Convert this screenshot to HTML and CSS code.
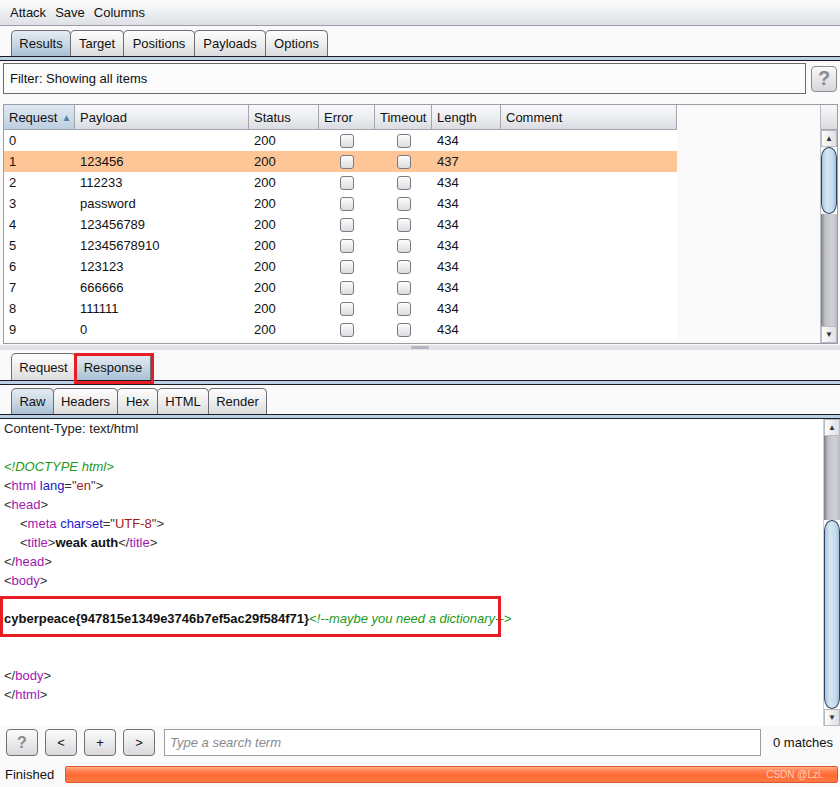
FILE: index.html
```html
<!DOCTYPE html>
<html lang="en">
<head>
<meta charset="UTF-8">
<title>Intruder attack</title>
<link rel="stylesheet" href="styles.css">
</head>
<body>
<div class="win">
  <div class="menubar">
    <span class="mi">Attack</span><span class="mi">Save</span><span class="mi">Columns</span>
  </div>

  <div class="tabs top-tabs">
    <div class="tab active w60">Results</div>
    <div class="tab w54">Target</div>
    <div class="tab w72">Positions</div>
    <div class="tab w72">Payloads</div>
    <div class="tab w63">Options</div>
  </div>
  <div class="tabline"></div>

  <div class="filterrow">
    <div class="filter">Filter: Showing all items</div>
    <div class="helpbtn">?</div>
  </div>

  <div class="tblwrap">
    <div class="tblmain">
      <div class="thead">
        <div class="grid">
          <div class="th sorted">Request <span class="sortarr">▲</span></div>
          <div class="th">Payload</div>
          <div class="th">Status</div>
          <div class="th">Error</div>
          <div class="th">Timeout</div>
          <div class="th">Length</div>
          <div class="th">Comment</div>
        </div>
      </div>
      <div class="tbody">
        <div class="grid row"><div class="td">0</div><div class="td"></div><div class="td">200</div><div class="td c"><span class="cb"></span></div><div class="td c"><span class="cb"></span></div><div class="td">434</div><div class="td"></div></div>
        <div class="grid row sel"><div class="td">1</div><div class="td">123456</div><div class="td">200</div><div class="td c"><span class="cb"></span></div><div class="td c"><span class="cb"></span></div><div class="td">437</div><div class="td"></div></div>
        <div class="grid row"><div class="td">2</div><div class="td">112233</div><div class="td">200</div><div class="td c"><span class="cb"></span></div><div class="td c"><span class="cb"></span></div><div class="td">434</div><div class="td"></div></div>
        <div class="grid row"><div class="td">3</div><div class="td">password</div><div class="td">200</div><div class="td c"><span class="cb"></span></div><div class="td c"><span class="cb"></span></div><div class="td">434</div><div class="td"></div></div>
        <div class="grid row"><div class="td">4</div><div class="td">123456789</div><div class="td">200</div><div class="td c"><span class="cb"></span></div><div class="td c"><span class="cb"></span></div><div class="td">434</div><div class="td"></div></div>
        <div class="grid row"><div class="td">5</div><div class="td">12345678910</div><div class="td">200</div><div class="td c"><span class="cb"></span></div><div class="td c"><span class="cb"></span></div><div class="td">434</div><div class="td"></div></div>
        <div class="grid row"><div class="td">6</div><div class="td">123123</div><div class="td">200</div><div class="td c"><span class="cb"></span></div><div class="td c"><span class="cb"></span></div><div class="td">434</div><div class="td"></div></div>
        <div class="grid row"><div class="td">7</div><div class="td">666666</div><div class="td">200</div><div class="td c"><span class="cb"></span></div><div class="td c"><span class="cb"></span></div><div class="td">434</div><div class="td"></div></div>
        <div class="grid row"><div class="td">8</div><div class="td">111111</div><div class="td">200</div><div class="td c"><span class="cb"></span></div><div class="td c"><span class="cb"></span></div><div class="td">434</div><div class="td"></div></div>
        <div class="grid row"><div class="td">9</div><div class="td">0</div><div class="td">200</div><div class="td c"><span class="cb"></span></div><div class="td c"><span class="cb"></span></div><div class="td">434</div><div class="td"></div></div>
      </div>
    </div>
    <div class="vscroll tblscroll">
      <div class="corner"></div>
      <div class="arrow">▲</div>
      <div class="thumb t1"></div>
      <div class="track"></div>
      <div class="arrow">▼</div>
    </div>
  </div>

  <div class="splitter"><span class="grip"></span></div>

  <div class="tabs rr-tabs">
    <div class="tab w65">Request</div>
    <div class="tab active w76">Response<span class="redbox rb-tab"></span></div>
  </div>
  <div class="tabline"></div>

  <div class="tabs raw-tabs">
    <div class="tab active w43">Raw</div>
    <div class="tab w65">Headers</div>
    <div class="tab w41">Hex</div>
    <div class="tab w52">HTML</div>
    <div class="tab w59">Render</div>
  </div>
  <div class="tabline"></div>

  <div class="content">
    <div class="code">
      <div class="ln">Content-Type: text/html</div>
      <div class="ln"></div>
      <div class="ln cm">&lt;!DOCTYPE html&gt;</div>
      <div class="ln"><span class="p">&lt;</span><span class="tg">html</span> <span class="at">lang</span><span class="p">=</span><span class="p">"</span><span class="av">en</span><span class="p">"&gt;</span></div>
      <div class="ln"><span class="p">&lt;</span><span class="tg">head</span><span class="p">&gt;</span></div>
      <div class="ln ind"><span class="p">&lt;</span><span class="tg">meta</span> <span class="at">charset</span><span class="p">=</span><span class="p">"</span><span class="av">UTF-8</span><span class="p">"&gt;</span></div>
      <div class="ln ind"><span class="p">&lt;</span><span class="tg">title</span><span class="p">&gt;</span><b>weak auth</b><span class="p">&lt;/</span><span class="tg">title</span><span class="p">&gt;</span></div>
      <div class="ln"><span class="p">&lt;/</span><span class="tg">head</span><span class="p">&gt;</span></div>
      <div class="ln"><span class="p">&lt;</span><span class="tg">body</span><span class="p">&gt;</span></div>
      <div class="ln"></div>
      <div class="ln flag"><b>cyberpeace{947815e1349e3746b7ef5ac29f584f71}</b><span class="cm">&lt;!--maybe you need a dictionary--&gt;</span><span class="redbox rb-flag"></span></div>
      <div class="ln"></div>
      <div class="ln"></div>
      <div class="ln"><span class="p">&lt;/</span><span class="tg">body</span><span class="p">&gt;</span></div>
      <div class="ln"><span class="p">&lt;/</span><span class="tg">html</span><span class="p">&gt;</span></div>
    </div>
    <div class="vscroll codescroll">
      <div class="arrow">▲</div>
      <div class="track t2a"></div>
      <div class="thumb t2"></div>
      <div class="arrow">▼</div>
    </div>
  </div>

  <div class="searchrow">
    <div class="btn q">?</div>
    <div class="btn">&lt;</div>
    <div class="btn">+</div>
    <div class="btn">&gt;</div>
    <div class="search">Type a search term</div>
    <div class="matches">0 matches</div>
  </div>

  <div class="statusrow">
    <div class="status">Finished</div>
    <div class="progress"><span class="wm">CSDN @Lzi.</span></div>
  </div>
</div>
</body>
</html>
```

FILE: styles.css
```css
* { box-sizing: border-box; }
html, body { margin: 0; padding: 0; }
body {
  width: 840px;
  height: 787px;
  overflow: hidden;
  background: #fafafa;
  font-family: "Liberation Sans", Arial, sans-serif;
  font-size: 13px;
  color: #111;
}
.win {
  width: 840px;
  height: 787px;
  display: flex;
  flex-direction: column;
  background: #fafafa;
}

/* menu */
.menubar {
  height: 26px;
  flex: 0 0 26px;
  display: flex;
  align-items: center;
  padding-left: 10px;
  padding-bottom: 1px;
  background: linear-gradient(#fbfbfc 0%, #f2f3f5 35%, #dfe0e6 100%);
  border-bottom: 1px solid #9a9ca6;
}
.mi { margin-right: 9px; color: #111; }

/* tabs */
.tabs {
  display: flex;
  padding-left: 11px;
  align-items: flex-end;
}
.top-tabs { margin-top: 4px; height: 26px; flex: 0 0 26px; }
.rr-tabs { margin-top: 0; height: 27px; flex: 0 0 27px; }
.raw-tabs { margin-top: 3px; height: 26px; flex: 0 0 26px; }
.tab {
  height: 100%;
  display: flex;
  align-items: center;
  justify-content: center;
  border: 1px solid #6e6e72;
  border-bottom: none;
  border-radius: 5px 5px 0 0;
  background: linear-gradient(#fdfdfd 0%, #eeeeef 50%, #dcdcde 100%);
  margin-right: -1px;
  position: relative;
  color: #111;
}
.tab.active {
  background: linear-gradient(#e6ecf2 0%, #c9d8e5 50%, #a9c0d4 100%);
}
.w41 { width: 41px; }
.w43 { width: 43px; }
.w52 { width: 52px; }
.w54 { width: 54px; }
.w59 { width: 59px; }
.w60 { width: 60px; }
.w63 { width: 63px; }
.w65 { width: 65px; }
.w72 { width: 72px; }
.w76 { width: 76px; }
.tabline {
  height: 5px;
  flex: 0 0 5px;
  background: #bcd0e4;
  border-top: 1px solid #1c1c28;
  border-bottom: 1px solid #1c1c28;
}

/* filter */
.filterrow {
  display: flex;
  align-items: center;
  padding: 2px 0 0 3px;
  height: 33px;
  flex: 0 0 33px;
}
.filter {
  width: 803px;
  height: 31px;
  border: 1px solid #6a6a6a;
  background: #fcfcfc;
  display: flex;
  align-items: center;
  padding-left: 6px;
}
.helpbtn {
  margin-left: 5px;
  width: 26px;
  height: 26px;
  border: 1px solid #8a8a8e;
  border-radius: 4px;
  background: linear-gradient(#fafafa, #d6d6da);
  color: #8a8a8e;
  font-weight: bold;
  font-size: 20px;
  display: flex;
  align-items: center;
  justify-content: center;
}

/* table */
.tblwrap {
  margin: 10px 2px 0 3px;
  height: 240px;
  flex: 0 0 240px;
  border: 1px solid #9b9da6;
  display: flex;
  background: #fafafa;
}
.tblmain { flex: 1; }
.grid {
  display: grid;
  grid-template-columns: 71px 174px 70px 56px 57px 69px 176px;
  width: 673px;
}
.thead .grid { height: 25px; }
.th {
  display: flex;
  align-items: center;
  padding-left: 5px;
  background: linear-gradient(#f8f8fa 0%, #eceef1 50%, #dadce1 100%);
  border-right: 1px solid #a3a6ad;
  border-bottom: 1px solid #a3a6ad;
  color: #111;
}
.th.sorted {
  background: linear-gradient(#dfe8f1 0%, #cfdcea 50%, #bccee0 100%);
}
.sortarr { font-size: 10px; color: #4f80ad; margin-left: 4px; }
.row { height: 21px; background: #fff; }
.row.sel { background: #fec697; }
.td {
  display: flex;
  align-items: center;
  padding-left: 5px;
  color: #111;
}
.td.c { justify-content: center; padding-left: 0; }
.cb {
  width: 14px;
  height: 14px;
  border: 1px solid #7a7a80;
  border-radius: 3px;
  background: linear-gradient(#fdfdfd, #dcdce0);
}

/* scrollbars */
.vscroll {
  width: 17px;
  display: flex;
  flex-direction: column;
  border-left: 1px solid #bdbfc6;
}
.corner {
  height: 25px;
  background: linear-gradient(#f8f8fa, #dadce1);
  border-bottom: 1px solid #a3a6ad;
}
.arrow {
  height: 17px;
  flex: 0 0 17px;
  font-size: 8px;
  color: #333;
  display: flex;
  align-items: center;
  justify-content: center;
  background: linear-gradient(to right, #fdfdfd, #dedfe3);
  border: 1px solid #b8bac0;
}
.track {
  flex: 1;
  background: linear-gradient(to right, #7d7f86 0%, #bfc1c7 25%, #cfd1d6 70%, #b9bbc1 100%);
}
.thumb {
  background: linear-gradient(to right, #a9c5de 0%, #d6e6f3 35%, #c6dbec 75%, #a3bfd8 100%);
  border: 1px solid #2b4460;
  border-radius: 9px / 12px;
}
.t1 { height: 67px; flex: 0 0 67px; }
.t2a { flex: 0 0 84px; }
.t2 { flex: 1; }

.splitter {
  height: 9px;
  flex: 0 0 9px;
  display: flex;
  justify-content: center;
  align-items: flex-start;
  background: linear-gradient(#fafafa 0, #fafafa 1px, #e2e3e9 1px, #e2e3e9 6px, #fafafa 6px);
}
.grip {
  width: 18px;
  height: 3px;
  margin-top: 2px;
  background: #b4b6be;
  border-radius: 1px;
}

/* red annotation boxes */
.redbox {
  position: absolute;
  border: 3px solid #e81c24;
  pointer-events: none;
}
.rb-tab { left: -2px; top: -1px; width: 80px; height: 31px; }

/* content */
.content {
  height: 307px;
  flex: 0 0 307px;
  display: flex;
  background: #fff;
}
.code {
  flex: 1;
  padding-left: 4px;
  background: #fff;
  color: #222;
}
.ln {
  height: 19px;
  line-height: 19px;
  white-space: pre;
  position: relative;
}
.ind { padding-left: 16px; }
.p { color: #333; }
.tg { color: #a117b0; }
.at { color: #1a1acc; }
.av { color: #a31818; }
.cm { color: #1d9a1d; font-style: italic; }
.code b { color: #111; }
.rb-flag { left: -4px; top: -13px; width: 501px; height: 41px; }
.codescroll { border-left: 1px solid #cfd1d6; }

/* search */
.searchrow {
  height: 27px;
  flex: 0 0 27px;
  margin-top: 3px;
  display: flex;
  align-items: center;
  padding-left: 6px;
}
.btn {
  width: 32px;
  height: 27px;
  margin-right: 7px;
  border: 1px solid #6f6f74;
  border-radius: 4px;
  background: linear-gradient(#fcfcfc, #d9d9dc);
  display: flex;
  align-items: center;
  justify-content: center;
  color: #111;
}
.btn.q { color: #8a8a8e; font-weight: bold; font-size: 16px; }
.search {
  margin-left: 2px;
  width: 597px;
  height: 27px;
  border: 1px solid #9d9da2;
  background: #fff;
  display: flex;
  align-items: center;
  padding-left: 5px;
  color: #8a8a8e;
  font-style: italic;
}
.matches { margin-left: 12px; color: #111; }

/* status */
.statusrow {
  height: 17px;
  flex: 0 0 17px;
  margin-top: 10px;
  display: flex;
  align-items: center;
  padding-left: 5px;
}
.status { width: 60px; color: #111; }
.progress {
  width: 773px;
  height: 17px;
  border: 1px solid #e2572a;
  border-radius: 2px;
  background: linear-gradient(#ffb08c 0%, #ff8250 25%, #ff6a34 55%, #ff7a44 100%);
  display: flex;
  align-items: center;
  justify-content: flex-end;
  padding-right: 14px;
}
.wm { font-size: 10px; color: rgba(255,235,225,0.75); }
```
